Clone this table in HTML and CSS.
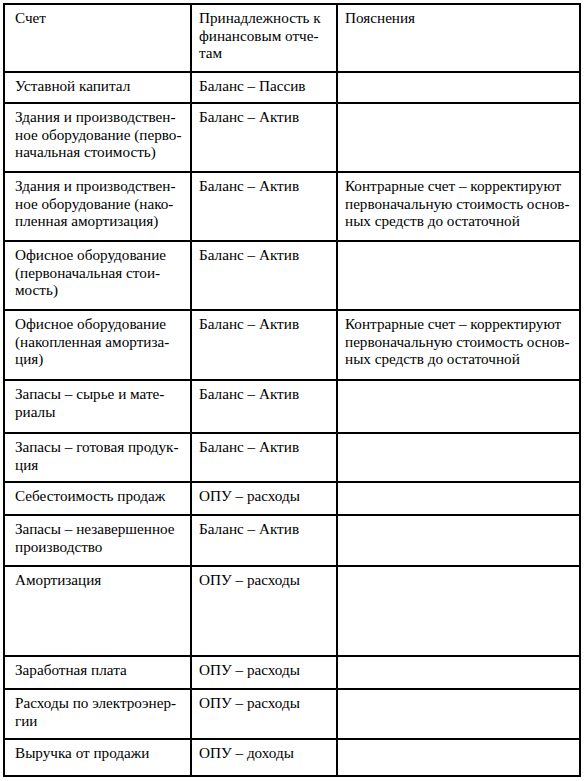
FILE: index.html
```html
<!DOCTYPE html>
<html lang="ru">
<head>
<meta charset="utf-8">
<link rel="stylesheet" href="styles.css">
</head>
<body>
<table class="grid">
  <colgroup>
    <col class="c1">
    <col class="c2">
    <col class="c3">
  </colgroup>
  <tr class="h-head">
    <td class="cell">Счет</td>
    <td class="cell">Принадлежность к<br>финансовым отче-<br>там</td>
    <td class="cell">Пояснения</td>
  </tr>
  <tr class="h-31">
    <td class="cell">Уставной капитал</td>
    <td class="cell">Баланс – Пассив</td>
    <td class="cell"></td>
  </tr>
  <tr class="h-69">
    <td class="cell">Здания и производствен-<br>ное оборудование (перво-<br>начальная стоимость)</td>
    <td class="cell">Баланс – Актив</td>
    <td class="cell"></td>
  </tr>
  <tr class="h-69">
    <td class="cell">Здания и производствен-<br>ное оборудование (нако-<br>пленная амортизация)</td>
    <td class="cell">Баланс – Актив</td>
    <td class="cell">Контрарные счет – корректируют<br>первоначальную стоимость основ-<br>ных средств до остаточной</td>
  </tr>
  <tr class="h-69">
    <td class="cell">Офисное оборудование<br>(первоначальная стои-<br>мость)</td>
    <td class="cell">Баланс – Актив</td>
    <td class="cell"></td>
  </tr>
  <tr class="h-70">
    <td class="cell">Офисное оборудование<br>(накопленная амортиза-<br>ция)</td>
    <td class="cell">Баланс – Актив</td>
    <td class="cell">Контрарные счет – корректируют<br>первоначальную стоимость основ-<br>ных средств до остаточной</td>
  </tr>
  <tr class="h-53">
    <td class="cell">Запасы – сырье и мате-<br>риалы</td>
    <td class="cell">Баланс – Актив</td>
    <td class="cell"></td>
  </tr>
  <tr class="h-49">
    <td class="cell">Запасы – готовая продук-<br>ция</td>
    <td class="cell">Баланс – Актив</td>
    <td class="cell"></td>
  </tr>
  <tr class="h-33">
    <td class="cell">Себестоимость продаж</td>
    <td class="cell">ОПУ – расходы</td>
    <td class="cell"></td>
  </tr>
  <tr class="h-51">
    <td class="cell">Запасы – незавершенное<br>производство</td>
    <td class="cell">Баланс – Актив</td>
    <td class="cell"></td>
  </tr>
  <tr class="h-90">
    <td class="cell">Амортизация</td>
    <td class="cell">ОПУ – расходы</td>
    <td class="cell"></td>
  </tr>
  <tr class="h-33">
    <td class="cell">Заработная плата</td>
    <td class="cell">ОПУ – расходы</td>
    <td class="cell"></td>
  </tr>
  <tr class="h-50">
    <td class="cell">Расходы по электроэнер-<br>гии</td>
    <td class="cell">ОПУ – расходы</td>
    <td class="cell"></td>
  </tr>
  <tr class="h-37">
    <td class="cell">Выручка от продажи</td>
    <td class="cell">ОПУ – доходы</td>
    <td class="cell"></td>
  </tr>
</table>
</body>
</html>
```

FILE: styles.css
```css
html, body {
  margin: 0;
  padding: 0;
  background: #ffffff;
}

body {
  padding: 3px 0 0 3px;
  color: #000000;
}

.grid {
  border-collapse: collapse;
  table-layout: fixed;
  width: 576px;
}

.c1 { width: 187px; }
.c2 { width: 146px; }
.c3 { width: 243px; }

.cell {
  font-family: "Times New Roman", Tinos, serif;
  font-size: 15.2px;
  line-height: 17.5px;
  border: 2px solid #000000;
  vertical-align: top;
  padding: 4px 4px 0 7px;
  white-space: nowrap;
  overflow: hidden;
}

.grid .cell:first-child {
  padding-left: 10px;
}

.h-head { height: 68px; }
.h-31 { height: 31px; }
.h-33 { height: 33px; }
.h-37 { height: 37px; }
.h-49 { height: 49px; }
.h-50 { height: 50px; }
.h-51 { height: 51px; }
.h-53 { height: 53px; }
.h-69 { height: 69px; }
.h-70 { height: 70px; }
.h-90 { height: 90px; }
```
